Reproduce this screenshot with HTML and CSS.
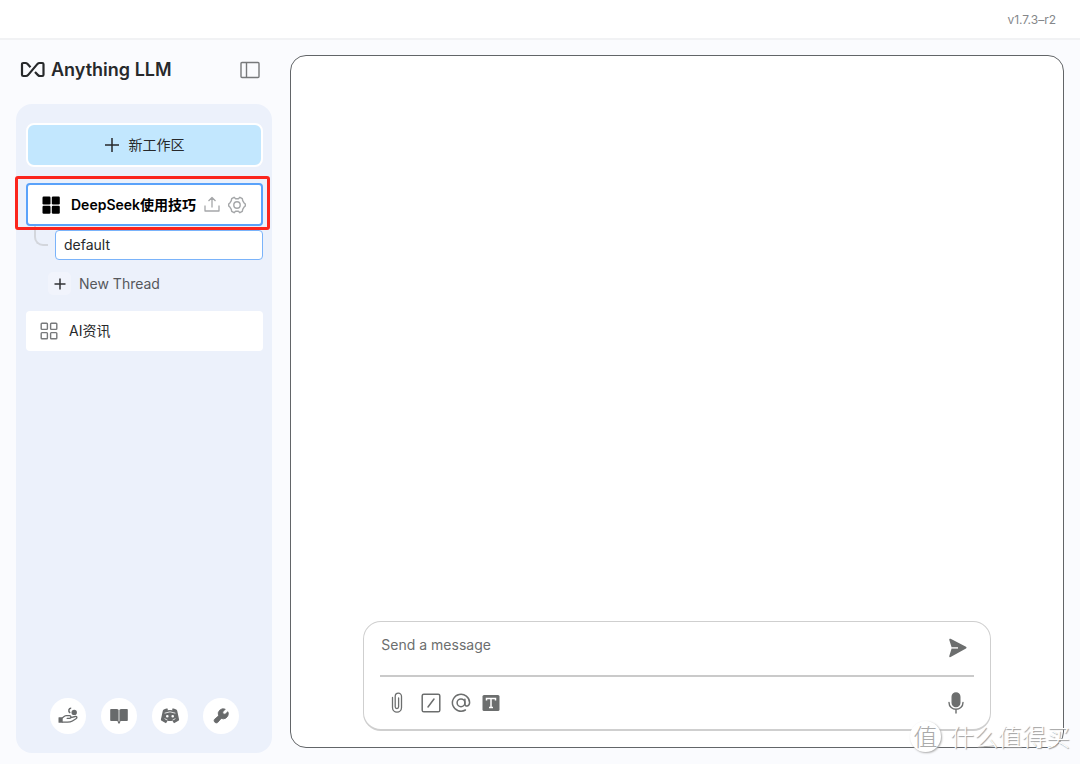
FILE: index.html
```html
<!DOCTYPE html>
<html lang="zh-CN">
<head>
    <meta charset="UTF-8">
    <meta name="viewport" content="width=device-width, initial-scale=1.0">
    <title>Anything LLM</title>
    <link rel="stylesheet" href="styles.css">
</head>
<body>

    <header class="topbar">v1.7.3–r2</header>

    <div class="layout">
        <aside class="sidebar">
            <div class="brand">
                <a class="logo" href="#">
                    <svg width="26" height="18" viewBox="0 0 26 18" fill="none" stroke="currentColor" stroke-width="2.2" stroke-linejoin="round">
                        <path d="M10.5 6.2L7.6 3Q6.6 2 5.400 2H3.300Q2 2 2 3.300V13.700Q2 15 3.300 15H6Q7.200 15 8 14.100L17.500 2.900Q18.300 2 19.500 2H22.200Q23.500 2 23.500 3.300V13.700Q23.500 15 22.200 15H20.100Q18.900 15 18 14.100L15 11"/>
                    </svg>
                    <span>Anything LLM</span>
                </a>
                <button class="icon-button" aria-label="Toggle sidebar">
                    <svg width="20" height="18" viewBox="0 0 20 18" fill="none" stroke="#77797b" stroke-width="1.4">
                        <rect x="1" y="1.5" width="18" height="15" rx="1"/>
                        <path d="M6.5 1.5V16.5"/>
                    </svg>
                </button>
            </div>

            <div class="panel">
                <button class="new-workspace">
                    <svg width="14" height="14" viewBox="0 0 14 14" stroke="currentColor" stroke-width="1.5"><path d="M7 0V14M0 7H14"/></svg>
                    新工作区
                </button>

                <div class="workspace active">
                    <svg width="18" height="18" viewBox="0 0 18 18" fill="#000">
                        <rect x="0.5" y="0.5" width="8" height="8" rx="1.2"/><rect x="9.8" y="0.5" width="8" height="8" rx="1.2"/>
                        <rect x="0.5" y="9.7" width="8" height="8" rx="1.2"/><rect x="9.8" y="9.7" width="8" height="8" rx="1.2"/>
                    </svg>
                    <a href="#">DeepSeek使用技巧</a>
                    <button class="icon-button" aria-label="Upload">
                        <svg width="16" height="18" viewBox="0 0 16 18" fill="none" stroke="#a5a7a9" stroke-width="1.3" stroke-linejoin="round">
                            <path d="M8 11.500V1.700M4.500 5L8 1.500L11.500 5M1 9.500V15H15V9.500"/>
                        </svg>
                    </button>
                    <button class="icon-button" aria-label="Settings">
                        <svg width="18" height="18" viewBox="0 0 18 18" fill="none" stroke="#a5a7a9" stroke-width="1.4" stroke-linejoin="round">
                            <circle cx="9" cy="9" r="3.2"/>
                            <path d="M6.100 1.300L7.600 2.700H10.400L11.900 1.300L14.300 2.700L14.700 4.700L15.900 6.700L17.300 8L17.300 10L15.900 11.300L14.700 13.300L14.300 15.300L11.900 16.700L10.400 15.300H7.600L6.100 16.700L3.700 15.300L3.300 13.300L2.100 11.300L0.700 10V8L2.100 6.700L3.300 4.700L3.700 2.700Z"/>
                        </svg>
                    </button>
                </div>

                <div class="threads">
                    <a class="thread" href="#">default</a>
                    <button class="new-thread">
                        <span class="plus"><svg width="12" height="12" viewBox="0 0 12 12" stroke="#303234" stroke-width="1.5"><path d="M6 0.5V11.5M0.5 6H11.5"/></svg></span>
                        New Thread
                    </button>
                </div>

                <div class="workspace">
                    <svg width="18" height="18" viewBox="0 0 18 18" fill="none" stroke="#77797b" stroke-width="1.4">
                        <rect x="1.2" y="1.2" width="6.2" height="6.2" rx="0.8"/><rect x="10.6" y="1.2" width="6.2" height="6.2" rx="0.8"/>
                        <rect x="1.2" y="10.6" width="6.2" height="6.2" rx="0.8"/><rect x="10.6" y="10.6" width="6.2" height="6.2" rx="0.8"/>
                    </svg>
                    <a href="#">AI资讯</a>
                </div>

                <footer class="links">
                    <a href="#" aria-label="Support">
                        <svg width="20" height="18" viewBox="0 0 20 18" fill="currentColor">
                            <circle cx="16.2" cy="5.4" r="2.7"/>
                            <path d="M13.2 1.3Q11.4 1.2 10.9 2.8T12.2 6" fill="none" stroke="currentColor" stroke-width="1.5"/>
                            <rect x="0.5" y="10.2" width="4.2" height="5.6" rx="0.6"/>
                            <path d="M4.5 10.8L6.8 9.1Q7.3 8.7 8.2 8.7H11.6Q12.9 8.8 12.9 10T11.6 11.4H9.2M12.8 10.6L17.2 9.5Q18.8 9.2 18.9 10.5Q18.9 11.2 18 11.7L14.4 14Q12.5 15.2 9.5 15.2H4.5" fill="none" stroke="currentColor" stroke-width="1.3" stroke-linecap="round"/>
                        </svg>
                    </a>
                    <a href="#" aria-label="Docs">
                        <svg width="20" height="18" viewBox="0 0 20 18" fill="currentColor">
                            <path d="M2 2H7.5Q9.2 2 9.6 3V14.6Q9 14 7.6 14H2Q1.2 14 1.2 13.2V2.8Q1.2 2 2 2ZM18 2H12.5Q10.8 2 10.4 3V14.6Q11 14 12.4 14H18Q18.8 14 18.8 13.2V2.8Q18.8 2 18 2Z"/>
                            <path d="M8.6 14.2H11.4L10.7 16.4H9.3Z"/>
                        </svg>
                    </a>
                    <a href="#" aria-label="Discord">
                        <svg width="20" height="18" viewBox="0 0 20 18" fill="currentColor" fill-rule="evenodd">
                            <path d="M6.3 1.6L8 1.8L7.5 3.2Q10 2.8 12.5 3.2L12 1.8L13.7 1.6L16.2 2.6Q16.9 2.9 17.2 3.7L19.1 12.4Q19.2 13.3 18.4 13.7L14 16.2L12.4 13.8Q10 14.3 7.6 13.8L6 16.2L1.6 13.7Q0.8 13.3 0.9 12.4L2.8 3.7Q3.1 2.9 3.8 2.6ZM7.3 8A1.3 1.3 0 1 0 7.3 10.6A1.3 1.3 0 1 0 7.3 8ZM12.7 8A1.3 1.3 0 1 0 12.7 10.6A1.3 1.3 0 1 0 12.7 8Z"/>
                            <path d="M4.6 6.2Q10 3.5 15.4 6.2M4.6 11.6Q6.1 12.6 7.4 13M15.4 11.6Q13.9 12.6 12.6 13" fill="none" stroke="#fff" stroke-width="0.8"/>
                        </svg>
                    </a>
                    <a href="#" aria-label="Settings">
                        <svg width="18" height="18" viewBox="0 0 256 256" fill="currentColor">
                            <path d="M232 96a72 72 0 0 1-100.900 66L79 222.200A33.400 33.400 0 0 1 33.800 177L94 124.900A72 72 0 0 1 188.300 30.400L152 70L157.700 98.300L186 104L225.600 67.700A71.600 71.600 0 0 1 232 96Z" stroke="currentColor" stroke-width="12" stroke-linejoin="round"/>
                        </svg>
                    </a>
                </footer>
                <span class="highlight"></span>
            </div>
        </aside>

        <main class="chat">
            <form class="prompt">
                <div class="message-row">
                    <textarea rows="1" placeholder="Send a message" aria-label="Send a message"></textarea>
                    <button class="icon-button" type="button" aria-label="Send">
                        <svg width="20" height="20" viewBox="0 0 20 20" fill="currentColor">
                            <path d="M1.300 1.900Q1 0.200 2.600 0.800L18 8.800Q19.300 9.700 18 10.600L2.600 19.100Q1 19.600 1.300 18L3.600 10.500H10V9.200H3.600Z"/>
                            <path d="M3.600 9.800H10" stroke="#ddd"/>
                        </svg>
                    </button>
                </div>
                <div class="tools">
                    <button class="icon-button" type="button" aria-label="Attach a file">
                        <svg width="12" height="22" viewBox="0 0 12 22" fill="none" stroke="currentColor" stroke-width="1.3" stroke-linecap="round">
                            <path d="M1.500 5.500V15.500A4.500 4.700 0 0 0 10.500 15.500V4.500A3.100 3.300 0 0 0 4.200 4.500V14.800A1.700 1.800 0 0 0 7.600 14.800V6"/>
                        </svg>
                    </button>
                    <button class="icon-button" type="button" aria-label="Slash commands">
                        <svg width="20" height="20" viewBox="0 0 20 20" fill="none" stroke="currentColor" stroke-width="1.5" stroke-linecap="round">
                            <rect x="1.200" y="1.200" width="17.600" height="17.600" rx="1.600"/><path d="M7 14L13 6"/>
                        </svg>
                    </button>
                    <button class="icon-button" type="button" aria-label="Agents">
                        <svg width="20" height="20" viewBox="0 0 20 20" fill="none" stroke="currentColor" stroke-width="1.5" stroke-linecap="round">
                            <circle cx="10" cy="9.800" r="3.900"/><path d="M13.900 6.200V10.800C13.900 14.200 18.600 13.600 18.600 9.500A8.600 8.400 0 1 0 14.400 17"/>
                        </svg>
                    </button>
                    <button class="icon-button" type="button" aria-label="Text size">
                        <svg width="20" height="20" viewBox="0 0 20 20">
                            <rect x="1.500" y="2" width="17" height="16" rx="1.500" fill="currentColor"/>
                            <path d="M5.500 7.500V5.500H14.500V7.500M10 5.500V14.500M8 14.500H12" fill="none" stroke="#fff" stroke-width="1.500"/>
                        </svg>
                    </button>
                    <button class="icon-button mic" type="button" aria-label="Speak">
                        <svg width="16" height="22" viewBox="0 0 16 22" fill="none" stroke="currentColor" stroke-width="1.400" stroke-linecap="round">
                            <rect x="4.200" y="1" width="7.600" height="13.600" rx="3.800" fill="currentColor"/>
                            <path d="M1 10.500C1 19.500 15 19.500 15 10.500M8 17.400V21"/>
                        </svg>
                    </button>
                </div>
            </form>
        </main>
    </div>

    <div class="watermark"><span class="badge">值</span><span>什么值得买</span></div>

</body>
</html>
```
FILE: styles.css
```css
* { box-sizing: border-box; }
body { margin: 0; height: 100vh; display: flex; flex-direction: column; background: #fafbfe; color: #27292b; font-family: Inter, "Noto Sans CJK SC", sans-serif; font-size: 14px; line-height: 20px; }
a { color: inherit; text-decoration: none; }
button { font: inherit; color: inherit; border: 0; background: none; padding: 0; cursor: pointer; }
svg { display: block; flex: none; }

.topbar { height: 40px; padding: 0 24px; background: #fff; border-bottom: 2px solid #f1f2f4; color: #85878a; font-size: 12px; line-height: 40px; text-align: right; }
.layout { flex: 1; display: flex; gap: 18px; padding: 15px 16px 16px; min-height: 0; }

.sidebar { width: 256px; display: flex; flex-direction: column; }
.brand { display: flex; align-items: center; justify-content: space-between; height: 30px; margin-bottom: 19px; padding: 0 12px 0 4px; }
.logo { display: flex; align-items: center; gap: 5px; font-size: 18px; font-weight: 600; }
.panel { position: relative; flex: 1; display: flex; flex-direction: column; margin-bottom: -5px; padding: 19px 9px 19px 10px; border-radius: 16px; background: #ecf1fb; }

.new-workspace { display: flex; align-items: center; justify-content: center; gap: 10px; height: 44px; margin-bottom: 16px; border: 2px solid #fff; border-radius: 8px; background: #c2e7fe; }
.workspace { display: flex; align-items: center; gap: 11px; height: 40px; padding: 0 14px; border-radius: 4px; background: #fff; }
.workspace a { flex: 1; white-space: nowrap; }
.workspace.active { height: 43px; gap: 8px; padding-right: 15px; border: 2px solid #5aa2fa; color: #000; font-weight: 600; }
.workspace.active a { padding-left: 3px; }

.threads { position: relative; display: flex; flex-direction: column; align-items: flex-start; gap: 12px; padding: 4px 0 16px 22px; }
.threads::before { content: ""; position: absolute; left: 8px; top: 0; width: 12px; height: 18px; border: solid #d3d6dc; border-width: 0 0 2px 2px; border-bottom-left-radius: 9px; }
.thread { align-self: stretch; margin-left: 7px; padding: 4px 8px; border: 1px solid #7ab3fa; border-radius: 4px; background: #fff; }
.new-thread { display: flex; align-items: center; gap: 8px; color: #56585b; }
.plus { display: grid; place-items: center; width: 23px; height: 23px; border-radius: 5px; background: #f1f4fc; }

.links { display: flex; justify-content: center; gap: 15px; margin-top: auto; }
.links a { display: grid; place-items: center; width: 36px; height: 36px; border-radius: 50%; background: #fff; color: #686a6b; }
.highlight { position: absolute; top: 72px; left: -1px; right: 2px; height: 54px; border: 3px solid #fb251d; border-radius: 3px; pointer-events: none; }

.chat { flex: 1; display: flex; flex-direction: column; justify-content: flex-end; align-items: center; padding: 16px 17px; border: 1px solid #626568; border-radius: 16px; background: #fff; }
.prompt { width: 85%; padding: 10px 16px 0; border: 1px solid #cfcfcf; border-bottom-width: 2px; border-radius: 18px; color: #6c6e6e; }
.message-row { display: flex; align-items: flex-start; gap: 12px; height: 45px; padding: 3px 6px 0 1px; border-bottom: 2px solid #cacaca; }
.message-row .icon-button { margin-top: 3px; }
textarea { flex: 1; padding: 0; border: 0; outline: 0; resize: none; background: none; color: inherit; font: inherit; }
textarea::placeholder { color: #6c6e6e; }
.tools { display: flex; align-items: center; gap: 10px; height: 52px; padding: 0 10px 0 11px; }
.tools .icon-button:first-child { margin-right: 8px; }
.mic { margin-left: auto; }

.watermark { position: absolute; right: 10px; bottom: 10px; display: flex; align-items: center; gap: 9px; color: #fff; font-family: "Noto Sans CJK SC", sans-serif; font-size: 24px; font-weight: 300; line-height: 36px; text-shadow: 1px 1px 1px #999; pointer-events: none; }
.badge { width: 31px; height: 31px; border-radius: 50%; background: #fff; box-shadow: 1px 1px 2px #aaa; color: #aaa; line-height: 30px; text-align: center; text-shadow: none; }
```
